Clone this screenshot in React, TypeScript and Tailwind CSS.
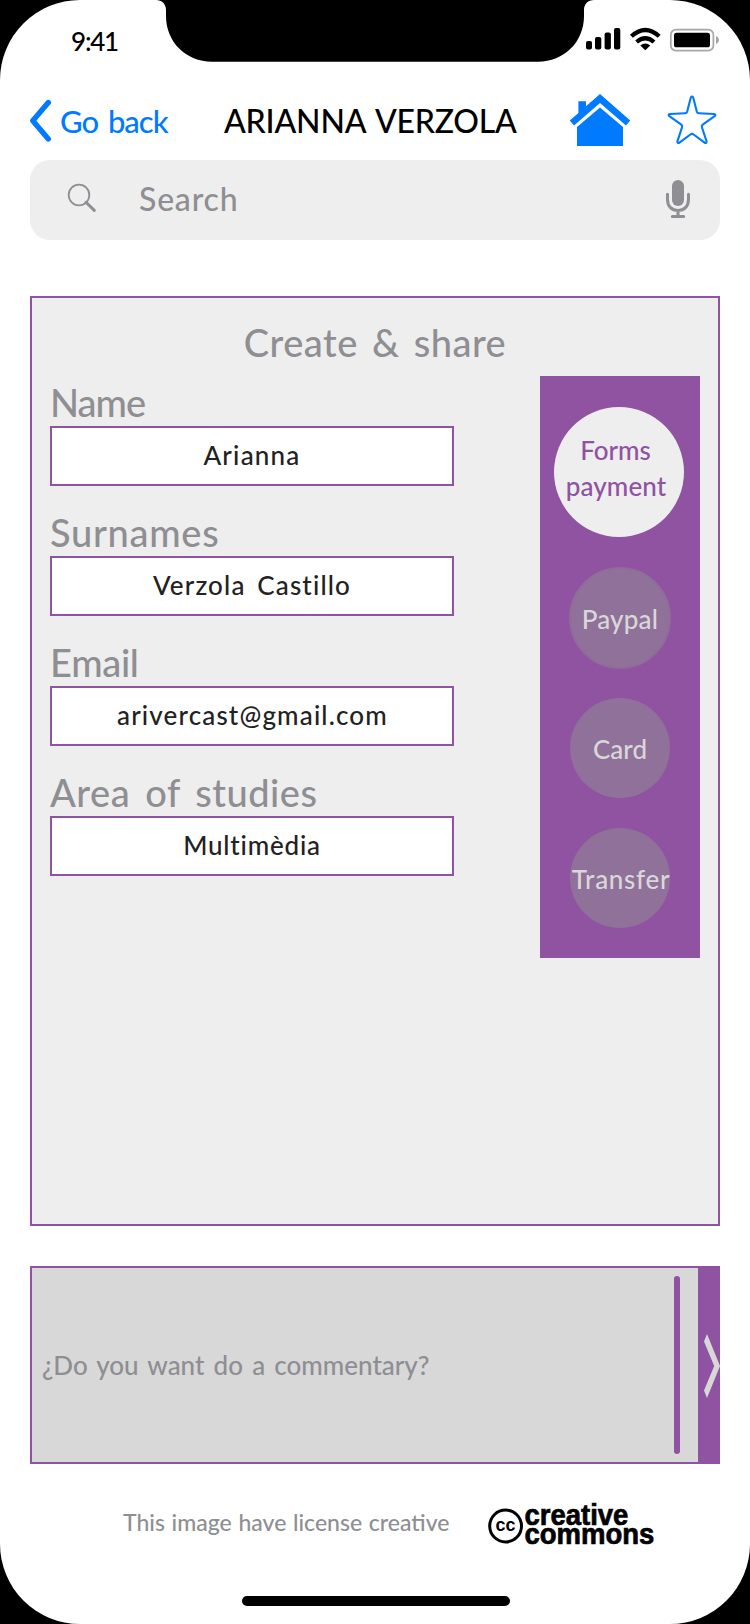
import React from "react";

function Notch() {
  return (
    <svg className="absolute left-0 top-0" width="750" height="64" viewBox="0 0 750 64" aria-hidden="true">
      <path d="M156 0C162 0 166 4 166 10V16C166 42 186 61.7 212 61.7H538C564 61.7 584 42 584 16V10C584 4 588 0 594 0Z" fill="#000" />
    </svg>
  );
}

function StatusIcons() {
  return (
    <svg width="134" height="26" viewBox="586 26 134 26" aria-hidden="true">
      <rect x="586" y="41" width="6" height="8.5" rx="2" />
      <rect x="595" y="37" width="6.3" height="12.5" rx="2" />
      <rect x="604.6" y="32.6" width="6.3" height="17" rx="2" />
      <rect x="614" y="28" width="6.3" height="21.6" rx="2" />
      <path d="M631.4 36.3Q645.3 23.6 659.2 36.3" fill="none" stroke="#000" strokeWidth="4.2" />
      <path d="M636.6 42Q645.3 34.4 654 42" fill="none" stroke="#000" strokeWidth="4.2" />
      <path d="M640.3 45.6Q645.3 41.6 650.3 45.6L645.3 50.3Z" />
      <rect x="670.8" y="29.6" width="42.6" height="21" rx="5.2" fill="none" stroke="#a6a6a6" strokeWidth="1.7" />
      <rect x="674" y="32.7" width="36" height="14.6" rx="2.6" />
      <path d="M716 36C718 37 719 38.5 719 40S718 43 716 44Z" fill="#a6a6a6" />
    </svg>
  );
}

function CreativeCommonsLogo() {
  return (
    <svg width="174" height="62" viewBox="486 1492 174 62" aria-label="creative commons">
      <circle cx="505.6" cy="1526" r="15.9" fill="none" stroke="#000" strokeWidth="3" />
      <text x="495.6" y="1531" fontFamily="'Liberation Sans', sans-serif" fontWeight="700" fontSize="19" textLength="20" lengthAdjust="spacingAndGlyphs">cc</text>
      <text fontFamily="'Liberation Sans', sans-serif" fontWeight="700" fontSize="29.5" stroke="#000" strokeWidth="0.7">
        <tspan x="524.4" y="1525" textLength="104" lengthAdjust="spacingAndGlyphs">creative</tspan>
        <tspan x="524.4" y="1543.6" textLength="130" lengthAdjust="spacingAndGlyphs">commons</tspan>
      </text>
    </svg>
  );
}

function Field({ label, value, labelClass, valueClass }: { label: string; value: string; labelClass: string; valueClass: string }) {
  return (
    <div className="flex h-[130px] w-[404px] flex-col">
      <div className={"h-[70px] whitespace-nowrap pt-[23px] text-[38px] leading-[46px] text-[#8e8e93] " + labelClass}>{label}</div>
      <div className={"flex h-[60px] items-center justify-center whitespace-nowrap border-2 border-[#8f53a1] bg-white pb-px text-[26px] leading-[33px] text-[#222] " + valueClass}>
        {value}
      </div>
    </div>
  );
}

export default function App() {
  return (
    <div className="h-[1624px] w-[750px] overflow-hidden bg-black font-['Lato',sans-serif] font-medium">
      <div className="relative flex h-full flex-col items-center rounded-[80px] bg-white">
        <Notch />
        <div className="flex h-[80px] w-full justify-between pl-[71px] pr-[30px] pt-[26px]">
          <span className="pt-px text-[26px] leading-[28px] tracking-[-1.2px] text-black">9:41</span>
          <StatusIcons />
        </div>

        <header className="flex h-[80px] w-[690px] items-start">
          <svg className="mt-[18px]" width="24" height="46" viewBox="0 0 24 46" fill="none" aria-hidden="true">
            <path d="M18.3 4.5L2.8 22.7L18.3 41" stroke="#007aff" strokeWidth="5.4" strokeLinecap="round" strokeLinejoin="round" />
          </svg>
          <span className="ml-[6px] mt-[23px] w-[134px] whitespace-nowrap text-[31px] leading-[36px] tracking-[-1px] text-[#007aff] [word-spacing:3px]">Go back</span>
          <h1 className="ml-[30px] mt-[23px] w-[300px] whitespace-nowrap text-[32px] leading-[36px] tracking-[-0.2px] text-black [word-spacing:3px]">ARIANNA VERZOLA</h1>
          <svg className="ml-[45px] mt-[13px]" width="62" height="54" viewBox="569 93 62 54" fill="#007aff" aria-hidden="true">
            <path d="M600 94L630.2 120.6L626 125.6L600 103L574 125.6L569.8 120.6L578.4 113V101.2H586V106.3Z" />
            <path d="M600 107.5L623 127V146H577V127Z" />
          </svg>
          <svg className="ml-[35px] mt-[14px]" width="52" height="54" viewBox="666 94 52 54" fill="none" aria-hidden="true">
            <path d="M690.8 97.5Q692 95.6 693.2 97.5L696.8 111.6Q697.3 113.2 699 113.3L714 114Q716.4 114.4 714.6 116.2L702.7 124.6Q701.4 125.6 701.9 127.2L706.6 141.4Q706.8 143.8 704.6 142.7L693.6 134.5Q692 133.3 690.4 134.5L679.4 142.7Q677.2 143.8 677.4 141.4L682.1 127.2Q682.6 125.6 681.3 124.6L669.4 116.2Q667.6 114.4 670 114L685 113.3Q686.7 113.2 687.2 111.6Z" stroke="#007aff" strokeWidth="2.1" strokeLinejoin="round" />
          </svg>
        </header>

        <div className="flex h-[80px] w-[690px] shrink-0 items-start rounded-[20px] bg-[#eee]">
          <svg className="ml-[36px] mt-[22px]" width="32" height="32" viewBox="66 182 32 32" fill="none" stroke="#8e8e93" aria-hidden="true">
            <circle cx="79" cy="195" r="10.3" strokeWidth="1.8" />
            <path d="M86 202.3L94.3 210.4" strokeWidth="3" strokeLinecap="round" />
          </svg>
          <span className="ml-[41px] mt-[20px] text-[32px] leading-[38px] tracking-[0.8px] text-[#8e8e93]">Search</span>
          <svg className="ml-auto mr-[28px] mt-[18px]" width="28" height="42" viewBox="664 178 28 42" fill="none" stroke="#8e8e93" aria-hidden="true">
            <rect x="672" y="180" width="12" height="26" rx="6" fill="#8e8e93" stroke="none" />
            <path d="M667.5 194.3V199.5C667.5 206.5 672 210.5 678 210.5S688.5 206.5 688.5 199.5V194.3M678 211V216M672.3 216.5H683.7" strokeWidth="3" strokeLinecap="round" />
          </svg>
        </div>

        <main className="mt-[56px] flex h-[930px] w-[690px] shrink-0 flex-col border-2 border-[#8f53a1] bg-[#eee]">
          <h2 className="h-[58px] whitespace-nowrap pt-[18px] text-center text-[38px] leading-[52px] tracking-[0.5px] text-[#8e8e93] [word-spacing:4px]">Create &amp; share</h2>
          <div className="flex justify-between pl-[18px] pr-[18px]">
            <div className="flex flex-col">
              <Field label="Name" value="Arianna" labelClass="tracking-[-1px]" valueClass="tracking-[1.2px]" />
              <Field label="Surnames" value="Verzola Castillo" labelClass="tracking-[0.7px]" valueClass="tracking-[1.15px] [word-spacing:4px]" />
              <Field label="Email" value="arivercast@gmail.com" labelClass="tracking-[-0.3px]" valueClass="pl-px tracking-[1.15px]" />
              <Field label="Area of studies" value="Multimèdia" labelClass="tracking-[0.5px] [word-spacing:5px]" valueClass="tracking-[0.8px]" />
            </div>
            <aside className="mt-[20px] flex h-[582px] w-[160px] flex-col items-center whitespace-nowrap bg-[#8f53a1] pt-[31px] text-[26px] leading-[36px] text-[#d8d8d8]">
              <div className="mr-[2px] flex h-[130px] w-[130px] flex-col items-center justify-center rounded-full bg-[#eee] pb-[9px] text-[#8f53a1]">
                <span className="mr-[7px]">Forms</span>
                <span className="mr-[6px] tracking-[0.1px]">payment</span>
              </div>
              <div className="mt-[30px] flex h-[102px] w-[102px] items-center justify-center rounded-full border-2 border-[#8f6c99] bg-[#8f7199] pt-px tracking-[0.2px]">Paypal</div>
              <div className="mt-[29px] flex h-[100px] w-[100px] items-center justify-center rounded-full bg-[#8f7199] pt-px">Card</div>
              <div className="mt-[30px] flex h-[100px] w-[100px] items-center justify-center rounded-full bg-[#8f7199] pl-[2px] pt-px tracking-[0.7px]">Transfer</div>
            </aside>
          </div>
        </main>

        <section className="mt-[40px] flex h-[198px] w-[690px] shrink-0 border-2 border-r-0 border-[#8f53a1] bg-[#d8d8d8]">
          <p className="flex flex-1 items-center whitespace-nowrap pb-px pl-[10px] text-[26px] leading-[32px] text-[#8e8e93] [word-spacing:2.6px]">¿Do you want do a commentary?</p>
          <div className="mr-[18px] mt-[8px] h-[178px] w-[6px] rounded-full bg-[#8f53a1]" />
          <div className="flex w-[22px] items-center justify-end bg-[#8f53a1] pt-[2px]">
            <svg width="16" height="64" viewBox="0 0 16 64" aria-hidden="true">
              <path d="M3 0L16 32L3 64L0 56.5L10.2 32L0 7.5Z" fill="#d8d8d8" />
            </svg>
          </div>
        </section>

        <footer className="mt-[28px] flex w-[690px] items-start">
          <p className="ml-[93px] mt-[15px] w-[363px] whitespace-nowrap text-[23px] leading-[30px] text-[#8e8e93] [word-spacing:0.9px]">This image have license creative</p>
          <CreativeCommonsLogo />
        </footer>
        <div className="absolute bottom-[18px] left-[242px] h-[10px] w-[268px] rounded-full bg-black" />
      </div>
    </div>
  );
}
